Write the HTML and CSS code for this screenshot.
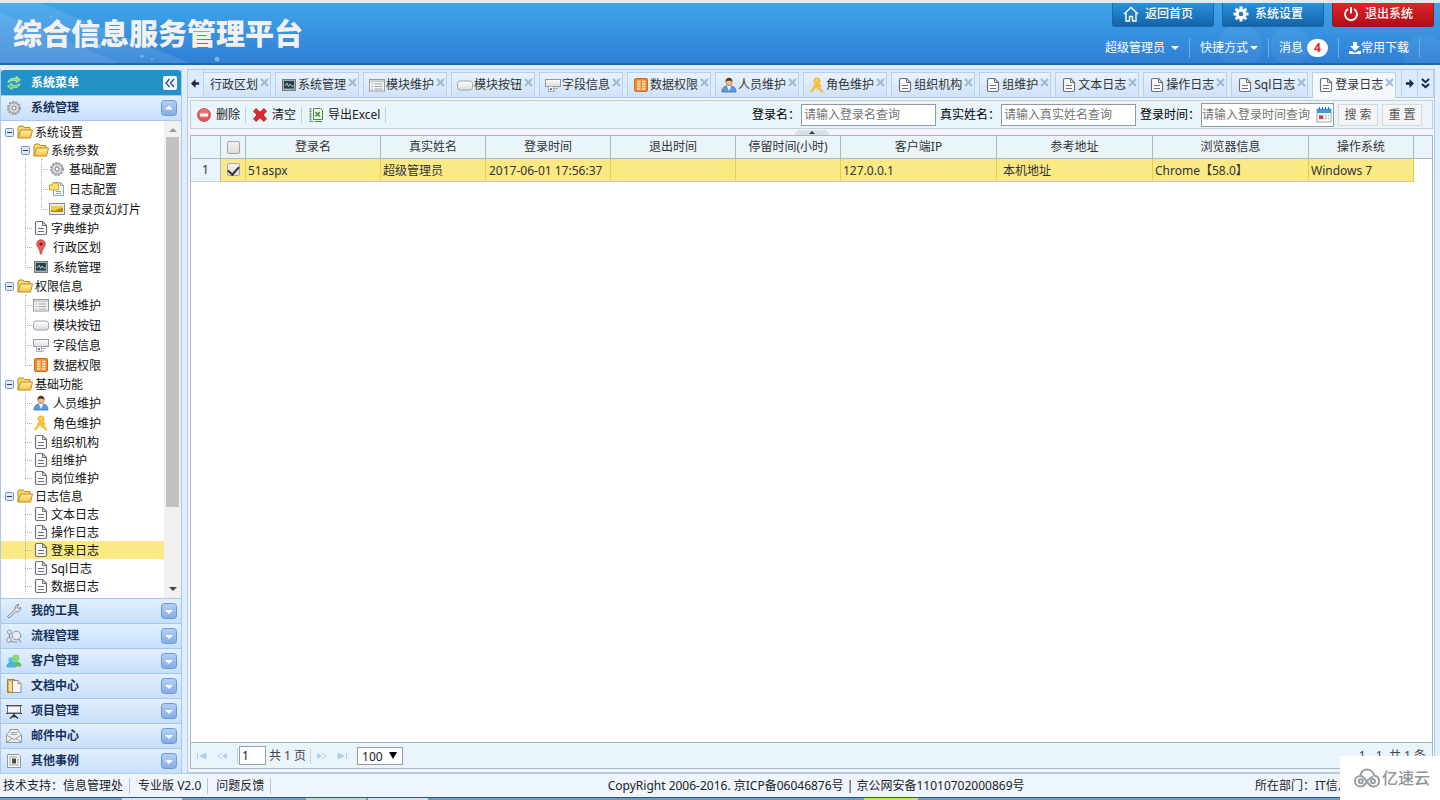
FILE: index.html
```html
<!DOCTYPE html>
<html lang="zh-CN">
<head>
<meta charset="utf-8">
<title>综合信息服务管理平台</title>
<link rel="stylesheet" href="styles.css">
</head>
<body>
<svg class="sprite" aria-hidden="true">
  <defs>
    <linearGradient id="g-folder" x1="0" y1="0" x2="0" y2="1"><stop offset="0" stop-color="#fff0a8"/><stop offset="1" stop-color="#f5c542"/></linearGradient>
    <linearGradient id="g-grey" x1="0" y1="0" x2="0" y2="1"><stop offset="0" stop-color="#fff"/><stop offset="1" stop-color="#d8dade"/></linearGradient>
    <linearGradient id="g-blue" x1="0" y1="0" x2="0" y2="1"><stop offset="0" stop-color="#b4d0f7"/><stop offset="1" stop-color="#84ade6"/></linearGradient>
  </defs>
  <symbol id="i-folder" viewBox="0 0 16 16"><path d="M1 14V3.500l1-1.500h4l1.500 1.500H13v3" fill="#f9d76a" stroke="#c08a1e"/><path d="M1 14L3.800 6H15.500L13.500 14z" fill="url(#g-folder)" stroke="#c08a1e"/></symbol>
  <symbol id="i-doc" viewBox="0 0 16 16"><path d="M2.500 3a1.500 1.500 0 0 1 1.500-1.500h5.500L13.500 5.500V13a1.500 1.500 0 0 1-1.500 1.500H4A1.500 1.500 0 0 1 2.500 13z" fill="#fdfdfe" stroke="#6b7079" stroke-width="1.200"/><path d="M9.500 1.500v4h4M5 8.500h6M5 11.500h6" fill="none" stroke="#6b7079"/></symbol>
  <symbol id="i-gear" viewBox="0 0 16 16"><circle cx="8" cy="8" r="6" fill="#e2e3e5" stroke="#9a9da2" stroke-width="2" stroke-dasharray="2.200 1"/><circle cx="8" cy="8" r="5" fill="#e6e7e9" stroke="#909398" stroke-width=".8"/><path d="M8 4v8M4 8h8M5.200 5.200l5.600 5.600M10.800 5.200l-5.600 5.600" stroke="#b4b6ba"/><circle cx="8" cy="8" r="2" fill="#fff" stroke="#808388"/></symbol>
  <symbol id="i-log" viewBox="0 0 16 16"><path d="M4.500 1.500h7l3 3v10h-10z" fill="#f6fbff" stroke="#86a5c8"/><path d="M11.500 1.500v3h3M7 10.500h5M7 12.500h5" fill="none" stroke="#86a5c8"/><path d="M3.500 2h6v7h-3l-6 0v-5h3z" fill="#fbe36a" stroke="#cfa52e"/></symbol>
  <symbol id="i-slide" viewBox="0 0 16 16"><rect x=".5" y="2.500" width="15" height="11" fill="#ececec" stroke="#8d8d8d"/><rect x="2" y="5" width="12" height="6" fill="#b58a08"/><path d="M2 5h12v2L9 8 6 10 2 9z" fill="#f0cf30"/></symbol>
  <symbol id="i-pin" viewBox="0 0 16 16"><path d="M8 .8a4.300 4.300 0 0 0-4.300 4.300C3.700 8 7 9.500 7.300 15h1.400C9 9.500 12.300 8 12.300 5.100A4.300 4.300 0 0 0 8 .8z" fill="#ec5a5a" stroke="#c23c3c" stroke-width=".8"/><circle cx="8" cy="5" r="1.600" fill="#741c1c"/></symbol>
  <symbol id="i-mon" viewBox="0 0 16 16"><rect x="1.500" y="2.500" width="13" height="11" fill="#a9adb0" stroke="#777b7e"/><rect x="3" y="4" width="10" height="7.500" fill="#25414a"/><path d="M4 9l2-3 1.500 3.500L9 7l1.500 2H13" fill="none" stroke="#9dd6c8"/></symbol>
  <symbol id="i-list" viewBox="0 0 16 16"><rect x=".5" y="2.500" width="15" height="11.500" fill="#f5f5f6" stroke="#989ba0"/><path d="M1 4.200h14" stroke="#c9cbce" stroke-width="2"/><path d="M2.500 7h1.500M2.500 9.500h1.500M2.500 12h1.500M5.500 7h8M5.500 9.500h8M5.500 12h8" stroke="#a1a4a9"/></symbol>
  <symbol id="i-btn" viewBox="0 0 16 16"><rect x=".5" y="4" width="15" height="9" rx="2.500" fill="url(#g-grey)" stroke="#a0a3aa"/></symbol>
  <symbol id="i-field" viewBox="0 0 16 16"><rect x=".5" y="2.500" width="15" height="7" fill="url(#g-grey)" stroke="#95989d"/><path d="M4 11.500h9M6 14h5" stroke="#a9acb1"/><rect x="3.500" y="9.500" width="5" height="5" fill="#fff" stroke="#a9acb1"/><path d="M4.500 11.500h3l-1.500 2z" fill="#333"/></symbol>
  <symbol id="i-data" viewBox="0 0 16 16"><rect x="1.500" y="1.500" width="13" height="13" rx="1.500" fill="#f28b2c" stroke="#d26c12"/><path d="M4 4.500h3.500M4 7h3.500M4 9.500h3.500M4 12h3.500M9 4.500h3.500M9 7h3.500M9 9.500h3.500M9 12h3.500" stroke="#ffedce" stroke-width="1.500"/></symbol>
  <symbol id="i-user" viewBox="0 0 16 16"><path d="M1 15c0-4 2-5.500 5-6h4c3 .5 5 2 5 6z" fill="#5c9bdc" stroke="#3470b4" stroke-width=".8"/><path d="M6 9l2 5 2-5z" fill="#fff"/><circle cx="8" cy="5" r="3.200" fill="#f0bd8c" stroke="#a86e3c" stroke-width=".6"/><path d="M4.600 5C4.500 2 6 .8 8 .8s3.600 1.200 3.400 4.200C10.500 3.500 6 3.200 4.600 5z" fill="#5b3a22"/></symbol>
  <symbol id="i-role" viewBox="0 0 16 16"><circle cx="8" cy="4" r="3" fill="#fbcf3f" stroke="#de9d1c" stroke-width=".7"/><path d="M8 6L6 10 2.500 14M9 7l1 4 3 3.500M8.500 7L5 9M9.500 7l2 2M8 7.500l1 4" fill="none" stroke="#f6be3a" stroke-width="2.400" stroke-linecap="round"/></symbol>
  <symbol id="i-refresh" viewBox="0 0 16 16"><path d="M2 7.500C2.500 4 6 2.500 10 3.500V1.200L14.500 4.800 10 8V5.800C7 5.200 5 5.500 2 7.500z" fill="#8ede62" stroke="#e9ffdc" stroke-width=".6"/><path d="M14 8.500C13.500 12 10 13.500 6 12.500v2.300L1.500 11.200 6 8v2.200c3 .6 5 .3 8-1.700z" fill="#6ccb4a" stroke="#e9ffdc" stroke-width=".6"/></symbol>
  <symbol id="i-wrench" viewBox="0 0 16 16"><path d="M1.500 13.500L9 6.500C8.500 4 10 1.500 13 1.500L11 4l1 1.500 2.800-1c.2 3-2.300 5-4.800 4.200L3 15z" fill="#e3e5e8" stroke="#7e838a"/></symbol>
  <symbol id="i-flow" viewBox="0 0 16 16"><circle cx="3.500" cy="4" r="2" fill="#eee" stroke="#8b9098"/><circle cx="3" cy="12" r="2.300" fill="#eee" stroke="#8b9098"/><circle cx="10.500" cy="7.500" r="4.300" fill="#e5edf5" stroke="#8b9098"/><path d="M3.500 6v4M5 13.500l6 1M12.500 11l2.500 3.500" stroke="#8b9098" stroke-width="1.200"/></symbol>
  <symbol id="i-people" viewBox="0 0 16 16"><path d="M.5 14C.5 10.500 3 9 5.500 9s5 1.500 5 5z" fill="#39a5d8"/><circle cx="5" cy="7" r="2.700" fill="#58bfe8"/><path d="M5 13.500c0-4 2.500-5 5-5s5.500 1 5.500 5z" fill="#62c05a"/><circle cx="10" cy="5" r="3.500" fill="#8ad678"/><path d="M1 14.500c0-3 2-4 4.500-4s4 1 4 4z" fill="#48b4e0"/></symbol>
  <symbol id="i-book" viewBox="0 0 16 16"><path d="M1.500 1.500h7v13h-7z" fill="#f3cc78" stroke="#a5802f"/><path d="M6.500 2.500h5.500l3 3v9h-8.500z" fill="#fafafa" stroke="#8d8d8d"/><path d="M12 2.500v3h3M2 1.500L6.500 3.500v11.500L2 13.500z" fill="#f8dc98" stroke="#a5802f" stroke-width=".8"/></symbol>
  <symbol id="i-board" viewBox="0 0 16 16"><path d="M0 2.500h16M0 10.500h16" stroke="#33383e" stroke-width="1.200"/><path d="M1.500 3h13v7h-13z" fill="#f3f7fb" stroke="#6a6f76"/><path d="M8 10v4.500M4 15.500L8 12l4 3.500" fill="none" stroke="#222" stroke-width="1.200"/></symbol>
  <symbol id="i-mail" viewBox="0 0 16 16"><path d="M.5 6.500L4 3V1.500h8V3l3.500 3.500v8H.5z" fill="#eef2ee" stroke="#8e9b9f"/><path d="M.5 7L8 11.500 15.500 7M1 14l5-3.500M15 14l-5-3.500M5 4.500h6M5 6.500h6" fill="none" stroke="#8e9b9f"/></symbol>
  <symbol id="i-news" viewBox="0 0 16 16"><path d="M1.500 1.500h11l2 2v11h-13z" fill="#fbfbfb" stroke="#92979c"/><path d="M3 4h8M3 6h2M3 8h2M3 10h2M3 12h10M11 6h2M11 8h2M11 10h2" stroke="#9a9ea3"/><rect x="6" y="5.500" width="4" height="5" fill="#4a4a4a"/></symbol>
  <symbol id="i-del" viewBox="0 0 16 16"><circle cx="8" cy="8" r="6.500" fill="#e5554c" stroke="#c9605a"/><circle cx="8" cy="6.500" r="5" fill="#f08c80" opacity=".5"/><rect x="4" y="6.500" width="8" height="3" rx=".5" fill="#fff"/></symbol>
  <symbol id="i-clear" viewBox="0 0 16 16"><path d="M4 1.500l4 3.700 4-3.700 2.500 2.700L11 8l3.500 3.800-2.500 2.700-4-3.700-4 3.700-2.500-2.700L5 8 1.500 4.200z" fill="#e02a2a" stroke="#b01818" stroke-width=".8"/></symbol>
  <symbol id="i-xls" viewBox="0 0 16 16"><path d="M2.500 1v14M1 2h3M1 4.500h3M1 7h3M1 9.500h3M1 12h3M1 14.500h5" stroke="#8aa886" fill="none"/><path d="M5.500 1.500h7l2 2v9h-9z" fill="#f2faee" stroke="#3f8b38"/><path d="M7.500 5l4.500 4.500M12 5l-4.500 4.500" stroke="#3f8b38" stroke-width="1.500"/><path d="M7 14.500h7" stroke="#3f8b38"/></symbol>
  <symbol id="i-cal" viewBox="0 0 16 16"><rect x="1" y="2" width="14" height="13" fill="#fff" stroke="#8ea6bd"/><path d="M1 2h14v4H1z" fill="#3b9bdf"/><path d="M3.500 0v3M6.500 0v3M9.500 0v3M12.500 0v3" stroke="#2472b0"/><path d="M3 8.500h10M3 11.500h10" stroke="#bcc6d0" stroke-width="2" stroke-dasharray="2 1"/><rect x="3" y="8.500" width="4" height="3.500" fill="#d83838"/></symbol>
  <symbol id="i-x" viewBox="0 0 9 9"><path d="M1 1l7 7M8 1L1 8" stroke="#9dbace" stroke-width="2"/></symbol>
  <symbol id="i-open" viewBox="0 0 16 16"><rect x=".5" y=".5" width="15" height="15" rx="3" fill="url(#g-blue)" stroke="#6c96d6"/><path d="M4 7h8l-4 4z" fill="#fff"/></symbol>
  <symbol id="i-close" viewBox="0 0 16 16"><rect x=".5" y=".5" width="15" height="15" rx="3" fill="url(#g-blue)" stroke="#6c96d6"/><path d="M4 9.500h8l-4-4z" fill="#fff"/></symbol>
  <symbol id="i-minus" viewBox="0 0 9 9"><rect x=".5" y=".5" width="8" height="8" rx="1" fill="#dfe9f6" stroke="#7595c0"/><path d="M2 4.500h5" stroke="#1d3f78"/></symbol>
</svg>

<header class="banner">
  <svg class="banner-art" viewBox="0 0 1440 62" preserveAspectRatio="none" aria-hidden="true">
    <path d="M0 0h40L190 62H0z" fill="#fff" opacity=".1"/><path d="M0 10L120 62H0z" fill="#fff" opacity=".08"/>
    <g fill="#9fd6ff" opacity=".6"><circle cx="99" cy="45" r="2"/><circle cx="51" cy="14" r="1"/><circle cx="142" cy="55" r="1.500"/><circle cx="152" cy="58" r="1"/><circle cx="217" cy="58" r="2.500"/></g>
    <g fill="#fff" opacity=".05"><circle cx="1240" cy="44" r="22"/><circle cx="1290" cy="44" r="20"/><circle cx="1425" cy="55" r="22"/></g>
  </svg>
  <h1 class="title">综合信息服务管理平台</h1>
  <div class="banner-side">
    <div class="big-buttons">
      <button class="big" type="button"><svg viewBox="0 0 16 16"><path d="M1 8l7-6.500L15 8M3 7v8h3.500v-4.500h3V15H13V7" fill="none" stroke="#fff" stroke-width="1.400"/></svg>返回首页</button>
      <button class="big" type="button"><svg viewBox="0 0 16 16"><path d="M8 .5v15M.5 8h15M2.700 2.700l10.600 10.600M13.300 2.700L2.700 13.300" stroke="#fff" stroke-width="3"/><circle cx="8" cy="8" r="5.300" fill="#fff"/><circle cx="8" cy="8" r="2.300" fill="#1c7cc4"/></svg>系统设置</button>
      <button class="big red" type="button"><svg viewBox="0 0 16 16"><path d="M5 3a6 6 0 1 0 6 0M8 1v6.500" fill="none" stroke="#fff" stroke-width="1.900"/></svg>退出系统</button>
    </div>
    <nav class="quick">
      <a href="#">超级管理员<i class="caret gap"></i></a>
      <a href="#">快捷方式<i class="caret"></i></a>
      <a href="#">消息<b class="badge">4</b></a>
      <a href="#"><svg class="down" viewBox="0 0 12 12"><path d="M4 0h4v4h3L6 9 1 4h3zM0 9h3l2 1.500h2L9 9h3v3H0z" fill="#fff"/></svg>常用下载</a>
    </nav>
  </div>
</header>

<div class="work">
  <aside class="side">
    <div class="side-title"><svg class="ic"><use href="#i-refresh"/></svg><span>系统菜单</span><button class="fold" type="button" aria-label="收起"><svg viewBox="0 0 10 10"><path d="M4.500 1L1 5l3.500 4M9 1L5.500 5 9 9" fill="none" stroke="#23507f" stroke-width="1.300"/></svg></button></div>
    <button class="bar" type="button"><svg class="ic"><use href="#i-gear"/></svg><span>系统管理</span><svg class="ic"><use href="#i-close"/></svg></button>
    <div class="tree-box">
      <ul class="tree">
        <li><div class="node"><i class="tg"><svg><use href="#i-minus"/></svg></i><svg class="ti"><use href="#i-folder"/></svg><span>系统设置</span></div>
          <ul>
            <li><div class="node"><i class="tg"><svg><use href="#i-minus"/></svg></i><svg class="ti"><use href="#i-folder"/></svg><span>系统参数</span></div>
              <ul>
                <li><div class="node wide"><i class="ln"></i><svg class="ti"><use href="#i-gear"/></svg><span>基础配置</span></div></li>
                <li><div class="node wide"><i class="ln"></i><svg class="ti"><use href="#i-log"/></svg><span>日志配置</span></div></li>
                <li><div class="node wide"><i class="ln end"></i><svg class="ti"><use href="#i-slide"/></svg><span>登录页幻灯片</span></div></li>
              </ul></li>
            <li><div class="node"><i class="ln"></i><svg class="ti"><use href="#i-doc"/></svg><span>字典维护</span></div></li>
            <li><div class="node wide"><i class="ln"></i><svg class="ti"><use href="#i-pin"/></svg><span>行政区划</span></div></li>
            <li><div class="node wide"><i class="ln end"></i><svg class="ti"><use href="#i-mon"/></svg><span>系统管理</span></div></li>
          </ul></li>
        <li><div class="node"><i class="tg"><svg><use href="#i-minus"/></svg></i><svg class="ti"><use href="#i-folder"/></svg><span>权限信息</span></div>
          <ul>
            <li><div class="node wide"><i class="ln"></i><svg class="ti"><use href="#i-list"/></svg><span>模块维护</span></div></li>
            <li><div class="node wide"><i class="ln"></i><svg class="ti"><use href="#i-btn"/></svg><span>模块按钮</span></div></li>
            <li><div class="node wide"><i class="ln"></i><svg class="ti"><use href="#i-field"/></svg><span>字段信息</span></div></li>
            <li><div class="node wide"><i class="ln end"></i><svg class="ti"><use href="#i-data"/></svg><span>数据权限</span></div></li>
          </ul></li>
        <li><div class="node"><i class="tg"><svg><use href="#i-minus"/></svg></i><svg class="ti"><use href="#i-folder"/></svg><span>基础功能</span></div>
          <ul>
            <li><div class="node wide"><i class="ln"></i><svg class="ti"><use href="#i-user"/></svg><span>人员维护</span></div></li>
            <li><div class="node wide"><i class="ln"></i><svg class="ti"><use href="#i-role"/></svg><span>角色维护</span></div></li>
            <li><div class="node"><i class="ln"></i><svg class="ti"><use href="#i-doc"/></svg><span>组织机构</span></div></li>
            <li><div class="node"><i class="ln"></i><svg class="ti"><use href="#i-doc"/></svg><span>组维护</span></div></li>
            <li><div class="node"><i class="ln end"></i><svg class="ti"><use href="#i-doc"/></svg><span>岗位维护</span></div></li>
          </ul></li>
        <li><div class="node"><i class="tg"><svg><use href="#i-minus"/></svg></i><svg class="ti"><use href="#i-folder"/></svg><span>日志信息</span></div>
          <ul>
            <li><div class="node"><i class="ln"></i><svg class="ti"><use href="#i-doc"/></svg><span>文本日志</span></div></li>
            <li><div class="node"><i class="ln"></i><svg class="ti"><use href="#i-doc"/></svg><span>操作日志</span></div></li>
            <li class="on"><div class="node"><i class="ln"></i><svg class="ti"><use href="#i-doc"/></svg><span>登录日志</span></div></li>
            <li><div class="node"><i class="ln"></i><svg class="ti"><use href="#i-doc"/></svg><span>Sql日志</span></div></li>
            <li><div class="node"><i class="ln"></i><svg class="ti"><use href="#i-doc"/></svg><span>数据日志</span></div></li>
          </ul></li>
      </ul>
      <div class="scroll"><i class="up"></i><div class="track"><div class="thumb"></div></div><i class="dn"></i></div>
    </div>
    <button class="bar" type="button"><svg class="ic"><use href="#i-wrench"/></svg><span>我的工具</span><svg class="ic"><use href="#i-open"/></svg></button>
    <button class="bar" type="button"><svg class="ic"><use href="#i-flow"/></svg><span>流程管理</span><svg class="ic"><use href="#i-open"/></svg></button>
    <button class="bar" type="button"><svg class="ic"><use href="#i-people"/></svg><span>客户管理</span><svg class="ic"><use href="#i-open"/></svg></button>
    <button class="bar" type="button"><svg class="ic"><use href="#i-book"/></svg><span>文档中心</span><svg class="ic"><use href="#i-open"/></svg></button>
    <button class="bar" type="button"><svg class="ic"><use href="#i-board"/></svg><span>项目管理</span><svg class="ic"><use href="#i-open"/></svg></button>
    <button class="bar" type="button"><svg class="ic"><use href="#i-mail"/></svg><span>邮件中心</span><svg class="ic"><use href="#i-open"/></svg></button>
    <button class="bar" type="button"><svg class="ic"><use href="#i-news"/></svg><span>其他事例</span><svg class="ic"><use href="#i-open"/></svg></button>
  </aside>

  <main class="main">
    <div class="tabbar">
      <button class="nav" type="button" aria-label="向左"><svg viewBox="0 0 10 10"><path d="M0 5l5-5v3.500h4v3H5V10z" fill="#12294e"/></svg></button>
      <div class="tabs">
        <div class="tab first"><span>行政区划</span><svg class="x"><use href="#i-x"/></svg></div>
        <div class="tab"><svg class="ic"><use href="#i-mon"/></svg><span>系统管理</span><svg class="x"><use href="#i-x"/></svg></div>
        <div class="tab"><svg class="ic"><use href="#i-list"/></svg><span>模块维护</span><svg class="x"><use href="#i-x"/></svg></div>
        <div class="tab"><svg class="ic"><use href="#i-btn"/></svg><span>模块按钮</span><svg class="x"><use href="#i-x"/></svg></div>
        <div class="tab"><svg class="ic"><use href="#i-field"/></svg><span>字段信息</span><svg class="x"><use href="#i-x"/></svg></div>
        <div class="tab"><svg class="ic"><use href="#i-data"/></svg><span>数据权限</span><svg class="x"><use href="#i-x"/></svg></div>
        <div class="tab"><svg class="ic"><use href="#i-user"/></svg><span>人员维护</span><svg class="x"><use href="#i-x"/></svg></div>
        <div class="tab"><svg class="ic"><use href="#i-role"/></svg><span>角色维护</span><svg class="x"><use href="#i-x"/></svg></div>
        <div class="tab"><svg class="ic"><use href="#i-doc"/></svg><span>组织机构</span><svg class="x"><use href="#i-x"/></svg></div>
        <div class="tab"><svg class="ic"><use href="#i-doc"/></svg><span>组维护</span><svg class="x"><use href="#i-x"/></svg></div>
        <div class="tab"><svg class="ic"><use href="#i-doc"/></svg><span>文本日志</span><svg class="x"><use href="#i-x"/></svg></div>
        <div class="tab"><svg class="ic"><use href="#i-doc"/></svg><span>操作日志</span><svg class="x"><use href="#i-x"/></svg></div>
        <div class="tab"><svg class="ic"><use href="#i-doc"/></svg><span>Sql日志</span><svg class="x"><use href="#i-x"/></svg></div>
        <div class="tab active"><svg class="ic"><use href="#i-doc"/></svg><span>登录日志</span><svg class="x"><use href="#i-x"/></svg></div>
      </div>
      <button class="nav" type="button" aria-label="向右"><svg viewBox="0 0 10 10"><path d="M10 5L5 0v3.500H1v3h4V10z" fill="#12294e"/></svg></button>
      <button class="nav" type="button" aria-label="更多"><svg viewBox="0 0 10 12"><path d="M1 1l4 3.500L9 1M1 6.500L5 10l4-3.500" fill="none" stroke="#12294e" stroke-width="2.200"/></svg></button>
    </div>
    <div class="page">
      <form class="tools">
        <button class="tool" type="button"><svg class="ic"><use href="#i-del"/></svg>删除</button>
        <button class="tool" type="button"><svg class="ic"><use href="#i-clear"/></svg>清空</button>
        <button class="tool" type="button"><svg class="ic"><use href="#i-xls"/></svg>导出Excel</button>
        <div class="query">
          <label for="q1">登录名：</label><input id="q1" class="box" type="text" placeholder="请输入登录名查询">
          <label for="q2">真实姓名：</label><input id="q2" class="box" type="text" placeholder="请输入真实姓名查询">
          <label for="q3">登录时间：</label><div class="box date"><input id="q3" type="text" placeholder="请输入登录时间查询"><svg class="ic"><use href="#i-cal"/></svg></div>
          <button class="act" type="button">搜 索</button>
          <button class="act" type="button">重 置</button>
        </div>
      </form>
      <div class="split"><i></i></div>
      <section class="grid">
        <table>
          <colgroup><col class="w30"><col class="w25"><col class="w135"><col class="w105"><col class="w125"><col class="w125"><col class="w105"><col class="w156"><col class="w156"><col class="w156"><col class="w105"><col></colgroup>
          <thead><tr><th></th><th><input type="checkbox" aria-label="全选"></th><th>登录名</th><th>真实姓名</th><th>登录时间</th><th>退出时间</th><th>停留时间(小时)</th><th>客户端IP</th><th>参考地址</th><th>浏览器信息</th><th>操作系统</th><th></th></tr></thead>
          <tbody><tr><td class="num">1</td><td class="ck"><input type="checkbox" checked aria-label="选择"></td><td>51aspx</td><td>超级管理员</td><td class="time">2017-06-01 17:56:37</td><td></td><td></td><td>127.0.0.1</td><td class="addr">本机地址</td><td>Chrome【58.0】</td><td>Windows 7</td><td class="rest"></td></tr></tbody>
        </table>
        <div class="pager">
          <button type="button" aria-label="首页"><svg viewBox="0 0 10 8"><path d="M.5 1v6M9 1L3 4l6 3z" fill="#b3cdec" stroke="#b3cdec"/></svg></button>
          <button type="button" aria-label="上一页"><svg viewBox="0 0 10 8"><path d="M5 1L1 4l4 3" fill="none" stroke="#b3cdec"/><path d="M10 1L5 4l5 3z" fill="#b3cdec"/></svg></button>
          <i class="sep"></i>
          <input type="text" value="1" aria-label="页码"><span>共 1 页</span>
          <i class="sep"></i>
          <button type="button" aria-label="下一页"><svg viewBox="0 0 10 8"><path d="M5 1l4 3-4 3" fill="none" stroke="#b3cdec"/><path d="M0 1l5 3-5 3z" fill="#b3cdec"/></svg></button>
          <button type="button" aria-label="末页"><svg viewBox="0 0 10 8"><path d="M9.500 1v6M1 1l6 3-6 3z" fill="#b3cdec" stroke="#b3cdec"/></svg></button>
          <div class="size"><select aria-label="每页条数"><option>100</option></select></div>
          <span class="total">1 - 1&nbsp; 共 1 条</span>
        </div>
      </section>
    </div>
  </main>
</div>

<footer class="foot">
  <span class="item">技术支持：信息管理处</span><span class="item">专业版 V2.0</span><span class="item">问题反馈</span>
  <span class="copy">CopyRight 2006-2016. 京ICP备06046876号 | 京公网安备11010702000869号</span>
  <span class="dept">所在部门：IT信息</span>
</footer>
<div class="dock"><i></i><i class="green"></i><i></i><i class="yellow"></i></div>
<div class="mark"><svg viewBox="0 0 26 20"><g fill="none" stroke="#9a9da1" stroke-width="2"><path d="M6.500 8C6.500 4 9.500 1.500 13 1.500S19.500 4 20 7.500c3 .3 5 2.500 5 5.500 0 3.500-2.500 5.500-5.500 5.500-4 0-5-3-7-5.500S9 7.800 6.500 8C3.500 8 1 10 1 13.200S3.500 18.500 6.500 18.500c4 0 5-3 7-5.500s3-4 5.500-4"/><circle cx="6.800" cy="13.200" r="2"/><circle cx="19" cy="13.200" r="2"/></g></svg>亿速云</div>
</body>
</html>
```
FILE: styles.css
```css
* { box-sizing: border-box; }
body {
  margin: 0; height: 100vh; overflow: hidden;
  display: flex; flex-direction: column;
  font: 12px/18px "Noto Sans", "Noto Sans CJK SC", sans-serif;
  color: #222; background: #dfeefd;
}
button, input, select { font: inherit; color: inherit; margin: 0; padding: 0; }
button { border: 0; background: none; display: flex; align-items: center; }
a { color: inherit; text-decoration: none; }
ul { list-style: none; margin: 0; padding: 0; }
svg { flex: none; display: block; }
.sprite { position: absolute; width: 0; height: 0; }
.ic { width: 16px; height: 16px; }

/* Banner */
.banner {
  position: relative; flex: none; height: 65px;
  display: flex; justify-content: space-between;
  border-top: 3px solid #e3e9ec; border-bottom: 2px solid #1868b4;
  background: linear-gradient(#3fa5ea, #2f7fd5);
  color: #fff;
}
.banner-art { position: absolute; inset: 0; width: 100%; height: 100%; }
.title { position: relative; margin: 0; padding-left: 13px; font-size: 29px; line-height: 62px; font-weight: 900; color: #f3f1f0; }
.banner-side { position: relative; display: flex; flex-direction: column; align-items: flex-end; }
.big-buttons { display: flex; gap: 8px; padding-right: 6px; }
.big {
  width: 102px; height: 24px; gap: 6px; padding: 0 0 2px 10px;
  border: 1px solid #1c66a8; border-top: 0; border-radius: 0 0 3px 3px;
  background: linear-gradient(#2793dc, #1562a8); font-weight: 500;
}
.big svg { width: 16px; height: 16px; }
.big.red { background: linear-gradient(#e0262a, #b00d16); border-color: #9c1420; }
.quick { display: flex; padding: 11px 20px 0 0; }
.quick a { display: flex; align-items: center; height: 20px; padding: 0 10px; border-right: 1px solid #66b2ea; }
.caret { border: 4px solid transparent; border-top-color: #fff; border-bottom: 0; margin-left: 2px; }
.caret.gap { margin-left: 6px; }
.badge { width: 21px; height: 18px; margin-left: 4px; border-radius: 9px; background: #fff; color: #e8262a; text-align: center; }
.down { width: 12px; height: 12px; }

/* Frame */
.work { flex: 1; min-height: 0; display: flex; gap: 5px; padding-top: 4px; }
.side { width: 182px; flex: none; display: flex; flex-direction: column; border: solid #a9c8ea; border-width: 0 1px; padding-top: 1px; }
.side-title, .bar { flex: none; display: flex; align-items: center; width: 100%; height: 25px; padding: 0 4px 0 5px; font-weight: 700; }
.side-title { background: #2390c8; color: #fff; border-radius: 3px 3px 0 0; }
.side-title span, .bar span { flex: 1; padding-left: 9px; text-align: left; }
.fold { width: 14px; height: 14px; border-radius: 2px; background: #eef6fd; justify-content: center; }
.fold svg { width: 10px; height: 10px; }
.bar { border-top: 1px solid #a6c8ee; background: linear-gradient(#e2effe, #c8dffa); color: #16325c; }
.tree-box { flex: 1; min-height: 0; display: flex; background: #fff; border-top: 1px solid #a6c8ee; }
.tree { flex: 1; padding-top: 2px; overflow: hidden; color: #111; }
.tree ul .node { padding-left: 16px; }
.tree ul ul .node { padding-left: 32px; }
.tree ul ul { background: linear-gradient(#b5b5b5 50%, transparent 0) 24px 0 / 1px 2px repeat-y; }
.node { display: flex; align-items: center; height: 18px; white-space: nowrap; }
.node.wide { height: 20px; }
.node span { padding-top: 1px; }
.ti { width: 16px; height: 16px; margin-right: 2px; }
.wide .ti { margin-right: 4px; }
.tg, .ln { flex: none; width: 16px; height: 100%; display: flex; align-items: center; padding-left: 4px; }
.tg svg { width: 9px; height: 9px; }
.ln { width: 8px; margin: 0 0 0 8px; padding: 0; background: linear-gradient(90deg, #b5b5b5 50%, transparent 0) 0 50% / 2px 1px repeat-x, linear-gradient(#b5b5b5 50%, transparent 0) 0 0 / 1px 2px repeat-y; }
.ln.end { background: linear-gradient(90deg, #b5b5b5 50%, transparent 0) 0 50% / 2px 1px repeat-x, repeating-linear-gradient(#b5b5b5 0 1px, transparent 1px 2px) 0 0 / 1px 10px no-repeat; }
.on { background: #fbe985; }
.scroll { width: 17px; display: flex; flex-direction: column; align-items: center; background: #f1f1f1; padding: 7px 0; }
.scroll .up, .scroll .dn { border: 4px solid transparent; }
.scroll .up { border-bottom-color: #999; border-top: 0; }
.scroll .dn { border-top-color: #444; border-bottom: 0; }
.track { flex: 1; margin: 5px 0 4px; }
.thumb { width: 13px; height: 83%; background: #c1c1c1; }

/* Tabs */
.main { flex: 1; min-width: 0; display: flex; flex-direction: column; margin-right: 5px; border: 1px solid #b4cbe6; background: #f2f6fc; }
.tabbar { flex: none; display: flex; height: 28px; background: #dcebfd; }
.nav { width: 16px; flex: none; justify-content: center; border-bottom: 1px solid #a9c6ec; border-right: 1px solid #b9d0ee; }
.nav svg { width: 9px; height: 11px; }
.tabs { flex: 1; min-width: 0; display: flex; gap: 4px; padding-top: 2px; overflow: hidden; border-right: 1px solid #b9d0ee; background: linear-gradient(#a9c6ec, #a9c6ec) bottom / 100% 1px no-repeat; }
.tab { flex: none; display: flex; align-items: center; height: 25px; padding: 0 1px 0 5px; border: 1px solid #b5d0f2; border-bottom: 0; background: linear-gradient(#e8f3ff, #cfe2fa); color: #333; }
.tab .ic { margin-right: 1px; }
.tab span { line-height: 24px; }
.tab.first { border-left: 0; padding-left: 6px; }
.tab.active { height: 26px; padding-bottom: 1px; background: #f5f9fe; }
.tab .x { width: 9px; height: 9px; margin: 0 0 6px 2px; }

/* Page */
.page { flex: 1; min-height: 0; display: flex; flex-direction: column; padding: 2px 1px 3px 2px; }
.tools { flex: none; display: flex; align-items: center; height: 29px; padding-left: 5px; border: 1px solid #c0cddb; background: #eaf4fb; }
.tool { gap: 4px; height: 16px; padding-right: 5px; margin-right: 6px; border-right: 1px solid #bccddd; }
.query { display: flex; align-items: center; margin-left: auto; padding-right: 10px; }
.query label { color: #000; margin-left: 4px; margin-right: 1px; white-space: nowrap; }
.box { width: 135px; height: 22px; padding: 0 2px; border: 1px solid #8f9aa5; background: #fff; }
.box.date { width: 133px; height: 24px; display: flex; align-items: center; padding: 0 1px 0 0; }
.date input { flex: 1; min-width: 0; height: 20px; border: 0; background: none; }
::placeholder { color: #757575; opacity: 1; }
.act { width: 40px; height: 22px; justify-content: center; margin-left: 4px; border: 1px solid #d5d9dd; background: #f5f5f6; color: #555; }
.split { flex: none; height: 6px; display: flex; justify-content: center; align-items: flex-end; }
.split i { width: 34px; height: 5px; border-radius: 8px 8px 0 0; display: flex; justify-content: center; background: #dadfe4; }
.split i::before { content: ""; align-self: center; border: 3px solid transparent; border-bottom-color: #333; border-top: 0; }

/* Grid */
.grid { flex: 1; min-height: 0; display: flex; flex-direction: column; border: 1px solid #a9b6c0; background: #fff; }
table { width: 100%; table-layout: fixed; border-collapse: separate; border-spacing: 0; color: #333; }
.w25 { width: 25px; } .w30 { width: 30px; } .w105 { width: 105px; } .w125 { width: 125px; } .w135 { width: 135px; } .w156 { width: 156px; }
th, td { height: 23px; padding: 0; white-space: nowrap; overflow: hidden; }
th { font-weight: 400; background: #eaf4fb; border-right: 1px solid #a9b9c6; border-bottom: 1px solid #a9b9c6; }
th:last-child { border-right: 0; }
td { padding: 1px 0 0 2px; background: #fbe985; border-right: 1px solid #e5cc58; border-bottom: 1px solid #efd430; }
td.num { padding: 0; text-align: center; background: #eaf4fb; border-right-color: #a9b9c6; border-bottom-color: #c8d6e0; }
td.ck { padding: 0 0 2px; text-align: center; }
td.time { padding-left: 3px; }
td.addr { padding-left: 6px; }
td.rest { background: #fff; border: 0; }
table input { margin: 0 auto; width: 13px; height: 13px; appearance: none; border: 1px solid #a5a5a5; border-radius: 2px; background: linear-gradient(#f2f2f2, #dcdcdc); display: flex; justify-content: center; align-items: flex-start; }
table input:checked::before { content: ""; flex: none; width: 5px; height: 9px; border: solid #333; border-width: 0 2px 2px 0; rotate: 42deg; }
.pager { flex: none; margin-top: auto; height: 26px; display: flex; align-items: center; padding: 0 6px; border-top: 1px solid #a9b6c0; background: #eaf4fb; color: #444; }
.pager button { width: 20px; }
.pager button svg { width: 10px; height: 8px; }
.pager .sep { width: 1px; height: 16px; margin: 0 1px 0 0; background: #c5d3df; }
.pager input { width: 27px; height: 19px; padding-left: 2px; margin-right: 3px; border: 1px solid #9aa3aa; background: #fff; color: #222; }
.pager span + .sep { margin: 0 6px 0 4px; }
.size { position: relative; }
.size select { display: block; width: 46px; height: 18px; padding-left: 4px; border: 1px solid #9a9a9a; border-radius: 0; background: #fff; color: #222; appearance: none; }
.size::after { content: ""; position: absolute; right: 6px; top: 5px; border: 4px solid transparent; border-top: 7px solid #000; border-bottom: 0; }
.total { margin-left: auto; }

/* Footer */
.foot { flex: none; display: flex; align-items: center; height: 24px; border-top: 1px solid #b9cbe0; background: #eff5fd; padding: 0 0 0 3px; white-space: nowrap; }
.item { padding-right: 6px; margin-right: 8px; line-height: 16px; border-right: 1px solid #b9c6d4; }
.copy { flex: 1; text-align: center; padding-left: 98px; }
.dept { width: 185px; }
.dock { flex: none; height: 3px; display: flex; padding-left: 122px; background: #6c9cc4; border-top: 1px solid #2f5578; }
.dock i { width: 60px; margin-right: 2px; background: #d5e2ec; }
.dock .green { margin-left: 122px; background: #bcd8c8; }
.dock .yellow { width: 54px; margin-left: 434px; background: #d4e060; }
.mark { position: absolute; right: 0; bottom: 0; width: 100px; height: 44px; display: flex; align-items: center; gap: 2px; padding-left: 14px; background: #fff; color: #919498; font-size: 16px; font-weight: 500; }
.mark svg { width: 26px; height: 20px; }
```
